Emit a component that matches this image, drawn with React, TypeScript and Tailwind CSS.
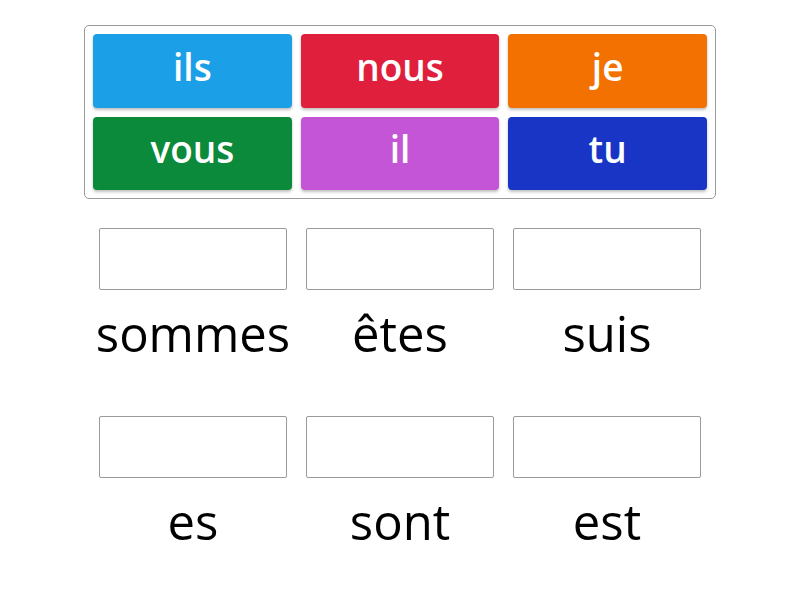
import React from "react";

const tiles = [
  { t: "ils", c: "bg-[#1b9fe6]" },
  { t: "nous", c: "bg-[#e01f3d]" },
  { t: "je", c: "bg-[#f27100]" },
  { t: "vous", c: "bg-[#0a8a3a]" },
  { t: "il", c: "bg-[#c355d6]" },
  { t: "tu", c: "bg-[#1835c6]" },
];

const answers = ["sommes", "êtes", "suis", "es", "sont", "est"];

export default function App() {
  return (
    <div
      className="w-[800px] h-[600px] bg-white flex flex-col items-center"
      style={{ fontFamily: '"Open Sans", sans-serif' }}
    >
      <div className="mt-[25px] w-[632px] h-[174px] border border-[#9a9a9a] rounded-[5px] p-[8px] grid grid-cols-3 gap-[9px]">
        {tiles.map((x) => (
          <div
            key={x.t}
            className={`${x.c} rounded-[4px] flex items-center justify-center pb-[9px] text-white text-[37px] font-semibold shadow-[0_2px_3px_rgba(0,0,0,0.25)]`}
          >
            {x.t}
          </div>
        ))}
      </div>
      <div className="mt-[29px] w-[621px] grid grid-cols-3 gap-y-[50px]">
        {answers.map((a) => (
          <div key={a} className="flex flex-col items-center">
            <div className="w-[188px] h-[62px] border border-[#9a9a9a] rounded-[2px] bg-white" />
            <div className="mt-[11px] leading-[65px] text-[49px] text-black">{a}</div>
          </div>
        ))}
      </div>
    </div>
  );
}
